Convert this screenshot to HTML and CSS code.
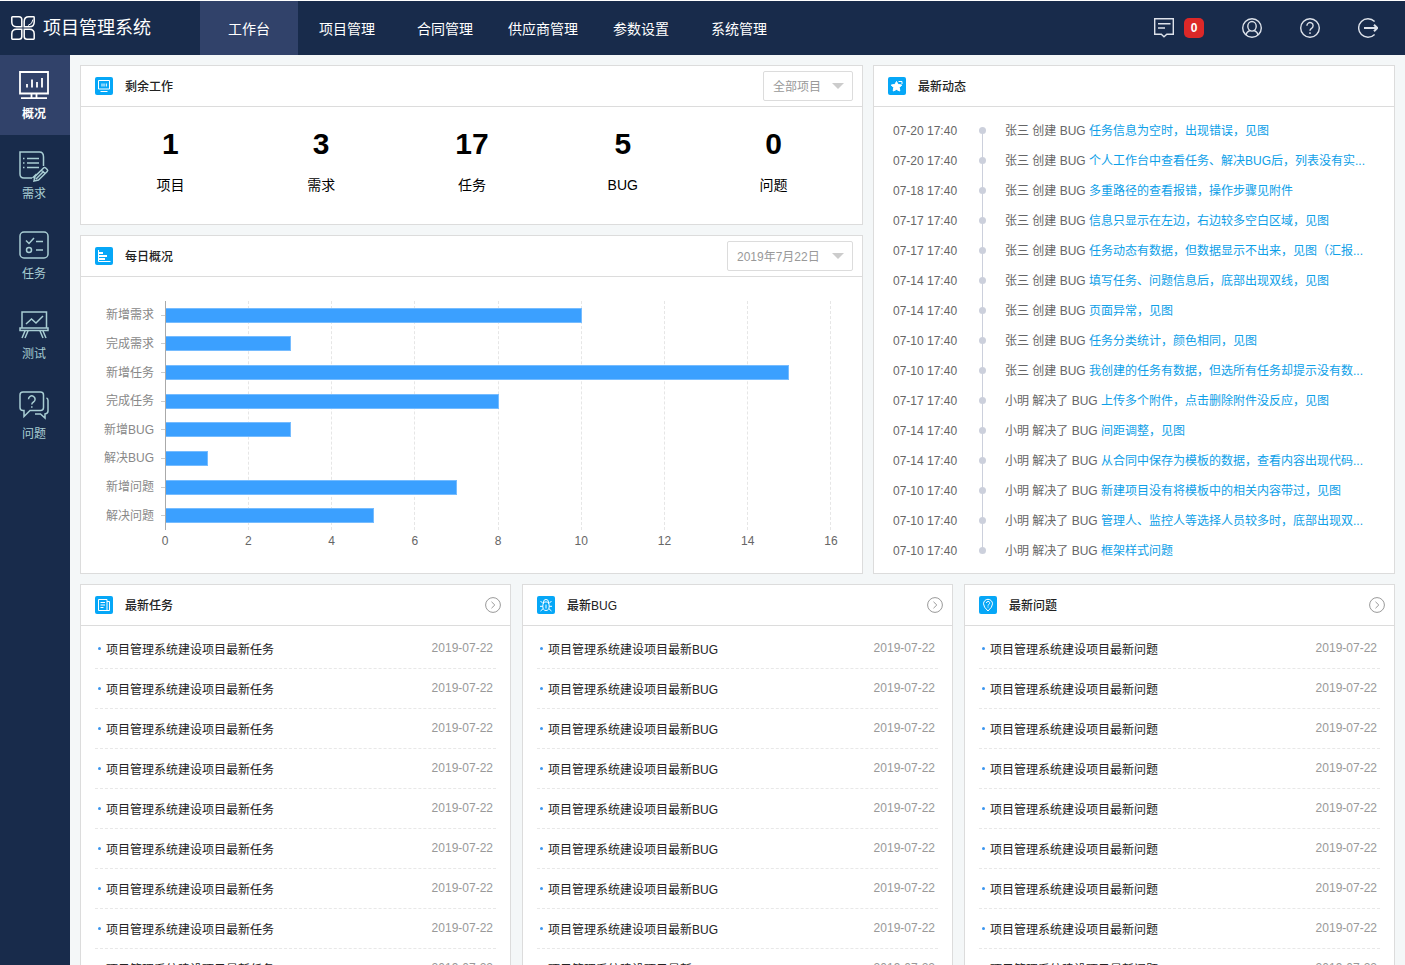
FILE: index.html
```html
<!DOCTYPE html>
<html lang="zh-CN">
<head>
<meta charset="utf-8">
<title>项目管理系统</title>
<link rel="stylesheet" href="styles.css">
</head>
<body>
<svg class="defs" aria-hidden="true">
  <symbol id="chevron" viewBox="0 0 16 16"><circle cx="8" cy="8" r="7.4"/><path d="M6.5 4.8 9.8 8l-3.3 3.2"/></symbol>
</svg>
<header class="topbar">
  <a class="brand" href="#">
    <svg class="brand-logo" viewBox="0 0 24 24" aria-hidden="true"><path d="M1.500.8H8q2.800 0 2.800 2.800v7.200H5.500Q.8 10.800.8 6V1.500q0-.7.7-.7zM22.500.8q.7 0 .7.7V6q0 4.800-4.700 4.800h-5.300V5.500q0-4.700 4.700-4.700zM1.500 23.200q-.7 0-.7-.7V18q0-4.800 4.700-4.800h5.300v7.200q0 2.800-2.800 2.800zM22.500 23.200q.7 0 .7-.7V18q0-4.800-4.700-4.800h-5.300v7.200q0 2.800 2.800 2.800z"/><path d="M22 3.500Q21.500 8 17 9.500" class="thin"/></svg>
    <span>项目管理系统</span>
  </a>
  <nav class="menu">
    <a class="menu-item active" href="#">工作台</a>
    <a class="menu-item" href="#">项目管理</a>
    <a class="menu-item" href="#">合同管理</a>
    <a class="menu-item" href="#">供应商管理</a>
    <a class="menu-item" href="#">参数设置</a>
    <a class="menu-item" href="#">系统管理</a>
  </nav>
  <div class="tools">
    <button class="tool" type="button" aria-label="消息"><svg viewBox="0 0 20 20"><path d="M.7.7h18.600v15.600h-6.500L10 18.800l-2.700-2.500H.7zM4 5.800h12.500M4 10h7"/></svg><span class="badge">0</span></button>
    <button class="tool" type="button" aria-label="用户"><svg viewBox="0 0 20 20"><circle cx="10" cy="10" r="9.300"/><ellipse cx="10" cy="8.300" rx="4.200" ry="4.800"/><path d="M4 17c.3-2.500 1.700-3.700 3.800-4.400M16 17c-.3-2.500-1.700-3.700-3.800-4.400"/></svg></button>
    <button class="tool" type="button" aria-label="帮助"><svg viewBox="0 0 20 20"><circle cx="10" cy="10" r="9.300"/><path d="M6.900 7.700a3.100 3.100 0 1 1 4.700 2.600Q10 11.200 10 12.800M10 14.300v1.600"/></svg></button>
    <button class="tool" type="button" aria-label="退出"><svg viewBox="0 0 20 20"><path d="M16.600 3.500a9.300 9.300 0 1 0 0 13"/><path d="M6 10h12M16 6.800l3.300 3.200-3.300 3.200" class="bold"/></svg></button>
  </div>
</header>
<div class="layout">
  <nav class="sidebar">
    <a class="side-item active" href="#"><svg viewBox="0 0 30 28"><path d="M1 1h28v21.500H1zM12.500 23v4M17.500 23v4M2 27.200h26"/><path d="M8 16.500V13M13 16.500V8.500M18 16.500V11M23 16.500V7"/></svg><span>概况</span></a>
    <a class="side-item" href="#"><svg viewBox="0 0 30 28"><path d="M24.500 15V6q0-5-4-5H1v22q0 4 4 4h8M4 7.500h1.500M4 12h1.500M4 16.500h1.500M8 7.500h12M8 12h12M8 16.500h12M15 30l1-4.500 8.500-8.500q1-1 2.200 0l1.500 1.500q1 1 0 2L19.500 29zM22.500 19l3.500 3.500M17 28l7-7M13.500 27l4-4"/></svg><span>需求</span></a>
    <a class="side-item" href="#"><svg viewBox="0 0 30 28"><rect x="1" y="1" width="28" height="26" rx="4"/><path d="M7 9.500l3 3 5-5.500M17 10.500h7M17 19h7"/><circle cx="10" cy="19" r="2.500"/></svg><span>任务</span></a>
    <a class="side-item" href="#"><svg viewBox="0 0 30 28"><path d="M3 17V1h24.500v16M1 17h28v2.500H1zM6 20 3 27M9 20l-3 7M21 20l3 7M24 20l3 7M7 13l5.500-5 4.500 4L24 5"/></svg><span>测试</span></a>
    <a class="side-item" href="#"><svg viewBox="0 0 30 28"><path d="M4 1h17.500q3 0 3 3v12.500q0 3-3 3H11l-6 6v-6H4q-3 0-3-3V4q0-3 3-3zM27.500 7q1.500.5 1.500 2.500V20q0 2.500-3 3v4l-4.500-4H16M9.500 8.200a3.300 3.300 0 1 1 5 2.800q-1.700 1-1.700 2.500M12.800 15.300v1.500"/></svg><span>问题</span></a>
  </nav>
  <main class="content">
    <div class="top-grid">
      <div class="column">
        <section class="card">
          <div class="card-head">
            <svg class="card-icon" viewBox="0 0 18 18"><path d="M3.500 3.500h11v8.500h-11zM7 6.500v3M9 6.500v3M11.300 6.500v3M5.500 14.500h7"/></svg>
            <h2>剩余工作</h2>
            <label class="picker picker-project"><select aria-label="项目"><option>全部项目</option></select></label>
          </div>
          <div class="stats">
            <div class="stat"><strong>1</strong><span>项目</span></div>
            <div class="stat"><strong>3</strong><span>需求</span></div>
            <div class="stat"><strong>17</strong><span>任务</span></div>
            <div class="stat"><strong>5</strong><span>BUG</span></div>
            <div class="stat"><strong>0</strong><span>问题</span></div>
          </div>
        </section>
        <section class="card grow">
          <div class="card-head">
            <svg class="card-icon" viewBox="0 0 18 18"><path d="M3.500 3v11.500H15.500"/><path class="thick" d="M4 6h4M4 9h8M4 12h6"/></svg>
            <h2>每日概况</h2>
            <label class="picker picker-date"><select aria-label="日期"><option>2019年7月22日</option></select></label>
          </div>
          <div class="chart">
            <div class="chart-labels"><span>新增需求</span><span>完成需求</span><span>新增任务</span><span>完成任务</span><span>新增BUG</span><span>解决BUG</span><span>新增问题</span><span>解决问题</span></div>
            <div class="plot">
              <div class="gridlines"><i></i><i></i><i></i><i></i><i></i><i></i><i></i><i></i></div>
              <div class="bars">
                <div class="bar-row"><div class="bar" style="width:62.5%"></div></div>
                <div class="bar-row"><div class="bar" style="width:18.75%"></div></div>
                <div class="bar-row"><div class="bar" style="width:93.75%"></div></div>
                <div class="bar-row"><div class="bar" style="width:50%"></div></div>
                <div class="bar-row"><div class="bar" style="width:18.75%"></div></div>
                <div class="bar-row"><div class="bar" style="width:6.25%"></div></div>
                <div class="bar-row"><div class="bar" style="width:43.75%"></div></div>
                <div class="bar-row"><div class="bar" style="width:31.25%"></div></div>
              </div>
            </div>
            <div class="axis"><span>0</span><span>2</span><span>4</span><span>6</span><span>8</span><span>10</span><span>12</span><span>14</span><span>16</span></div>
          </div>
        </section>
      </div>
      <section class="card">
        <div class="card-head">
          <svg class="card-icon" viewBox="0 0 18 18"><path class="solid" d="M8.500 4.500l1.600 2.900 3.700.6-2.500 2.500.5 3.500-3.300-1.500L5.200 14l.5-3.500L3.200 8l3.700-.6z"/><path d="M10.500 4.500h3.500v2.500"/></svg>
          <h2>最新动态</h2>
        </div>
        <ol class="feed">
          <li><time>07-20 17:40</time><p>张三 创建 BUG <a href="#">任务信息为空时，出现错误，见图</a></p></li>
          <li><time>07-20 17:40</time><p>张三 创建 BUG <a href="#">个人工作台中查看任务、解决BUG后，列表没有实...</a></p></li>
          <li><time>07-18 17:40</time><p>张三 创建 BUG <a href="#">多重路径的查看报错，操作步骤见附件</a></p></li>
          <li><time>07-17 17:40</time><p>张三 创建 BUG <a href="#">信息只显示在左边，右边较多空白区域，见图</a></p></li>
          <li><time>07-17 17:40</time><p>张三 创建 BUG <a href="#">任务动态有数据，但数据显示不出来，见图（汇报...</a></p></li>
          <li><time>07-14 17:40</time><p>张三 创建 BUG <a href="#">填写任务、问题信息后，底部出现双线，见图</a></p></li>
          <li><time>07-14 17:40</time><p>张三 创建 BUG <a href="#">页面异常，见图</a></p></li>
          <li><time>07-10 17:40</time><p>张三 创建 BUG <a href="#">任务分类统计，颜色相同，见图</a></p></li>
          <li><time>07-10 17:40</time><p>张三 创建 BUG <a href="#">我创建的任务有数据，但选所有任务却提示没有数...</a></p></li>
          <li><time>07-17 17:40</time><p>小明 解决了 BUG <a href="#">上传多个附件，点击删除附件没反应，见图</a></p></li>
          <li><time>07-14 17:40</time><p>小明 解决了 BUG <a href="#">间距调整，见图</a></p></li>
          <li><time>07-14 17:40</time><p>小明 解决了 BUG <a href="#">从合同中保存为模板的数据，查看内容出现代码...</a></p></li>
          <li><time>07-10 17:40</time><p>小明 解决了 BUG <a href="#">新建项目没有将模板中的相关内容带过，见图</a></p></li>
          <li><time>07-10 17:40</time><p>小明 解决了 BUG <a href="#">管理人、监控人等选择人员较多时，底部出现双...</a></p></li>
          <li><time>07-10 17:40</time><p>小明 解决了 BUG <a href="#">框架样式问题</a></p></li>
        </ol>
      </section>
    </div>
    <div class="bottom-grid">
      <section class="card">
        <div class="card-head">
          <svg class="card-icon" viewBox="0 0 18 18"><path d="M3.500 3.500h8.500v11h-8.500zM12 5.500h2.500v9H12M5.500 6.500h4.500M5.500 9h4.500M5.500 11.500h3"/></svg>
          <h2>最新任务</h2>
          <a class="more" href="#" aria-label="更多任务"><svg><use href="#chevron"/></svg></a>
        </div>
        <ul class="list">
          <li><a href="#">项目管理系统建设项目最新任务</a><time>2019-07-22</time></li>
          <li><a href="#">项目管理系统建设项目最新任务</a><time>2019-07-22</time></li>
          <li><a href="#">项目管理系统建设项目最新任务</a><time>2019-07-22</time></li>
          <li><a href="#">项目管理系统建设项目最新任务</a><time>2019-07-22</time></li>
          <li><a href="#">项目管理系统建设项目最新任务</a><time>2019-07-22</time></li>
          <li><a href="#">项目管理系统建设项目最新任务</a><time>2019-07-22</time></li>
          <li><a href="#">项目管理系统建设项目最新任务</a><time>2019-07-22</time></li>
          <li><a href="#">项目管理系统建设项目最新任务</a><time>2019-07-22</time></li>
          <li><a href="#">项目管理系统建设项目最新任务</a><time>2019-07-22</time></li>
        </ul>
      </section>
      <section class="card">
        <div class="card-head">
          <svg class="card-icon" viewBox="0 0 18 18"><ellipse cx="9" cy="10.200" rx="3.200" ry="4.300"/><path d="M6.500 7V6q0-2.500 2.500-2.500T11.500 6v1M9 8.500v4M3.500 5l2.500 2.500M14.500 5 12 7.500M3 10.300h2.800M15 10.300h-2.800M3.500 15 6 12.800M14.500 15 12 12.800"/></svg>
          <h2>最新BUG</h2>
          <a class="more" href="#" aria-label="更多BUG"><svg><use href="#chevron"/></svg></a>
        </div>
        <ul class="list">
          <li><a href="#">项目管理系统建设项目最新BUG</a><time>2019-07-22</time></li>
          <li><a href="#">项目管理系统建设项目最新BUG</a><time>2019-07-22</time></li>
          <li><a href="#">项目管理系统建设项目最新BUG</a><time>2019-07-22</time></li>
          <li><a href="#">项目管理系统建设项目最新BUG</a><time>2019-07-22</time></li>
          <li><a href="#">项目管理系统建设项目最新BUG</a><time>2019-07-22</time></li>
          <li><a href="#">项目管理系统建设项目最新BUG</a><time>2019-07-22</time></li>
          <li><a href="#">项目管理系统建设项目最新BUG</a><time>2019-07-22</time></li>
          <li><a href="#">项目管理系统建设项目最新BUG</a><time>2019-07-22</time></li>
          <li><a href="#">项目管理系统建设项目最新BUG</a><time>2019-07-22</time></li>
        </ul>
      </section>
      <section class="card">
        <div class="card-head">
          <svg class="card-icon" viewBox="0 0 18 18"><path d="M9 15Q4.500 11 4.500 7.800a4.500 4.500 0 0 1 9 0Q13.500 11 9 15zM7.500 7a1.600 1.600 0 1 1 2.300 1.400Q9 8.800 9 9.600M9 10.500v1"/></svg>
          <h2>最新问题</h2>
          <a class="more" href="#" aria-label="更多问题"><svg><use href="#chevron"/></svg></a>
        </div>
        <ul class="list">
          <li><a href="#">项目管理系统建设项目最新问题</a><time>2019-07-22</time></li>
          <li><a href="#">项目管理系统建设项目最新问题</a><time>2019-07-22</time></li>
          <li><a href="#">项目管理系统建设项目最新问题</a><time>2019-07-22</time></li>
          <li><a href="#">项目管理系统建设项目最新问题</a><time>2019-07-22</time></li>
          <li><a href="#">项目管理系统建设项目最新问题</a><time>2019-07-22</time></li>
          <li><a href="#">项目管理系统建设项目最新问题</a><time>2019-07-22</time></li>
          <li><a href="#">项目管理系统建设项目最新问题</a><time>2019-07-22</time></li>
          <li><a href="#">项目管理系统建设项目最新问题</a><time>2019-07-22</time></li>
          <li><a href="#">项目管理系统建设项目最新问题</a><time>2019-07-22</time></li>
        </ul>
      </section>
    </div>
  </main>
</div>
</body>
</html>
```

FILE: styles.css
```css
* { box-sizing: border-box; }
body {
  margin: 0;
  height: 100vh;
  display: flex;
  flex-direction: column;
  overflow: hidden;
  border-top: 1px solid #fff;
  background: #f4f7f8;
  color: #222;
  font: 12px/20px "Liberation Sans", "Noto Sans CJK SC", sans-serif;
}
a { color: inherit; text-decoration: none; }
h2, p, ul, ol { margin: 0; padding: 0; list-style: none; }
button, select { font: inherit; }
svg { fill: none; stroke: currentColor; flex: none; }
.defs { position: absolute; width: 0; height: 0; }

/* Top bar */
.topbar { display: flex; flex: none; height: 54px; background: #182b4b; color: #fff; }
.brand { display: flex; align-items: center; gap: 8px; width: 200px; padding-left: 11px; font-size: 18px; }
.brand-logo { width: 24px; height: 24px; stroke-width: 1.5; }
.brand-logo .thin { stroke-width: 1; }
.menu { display: flex; }
.menu-item { display: flex; align-items: center; justify-content: center; width: 98px; padding-top: 2px; font-size: 14px; }
.menu-item.active { background: #31426a; }
.tools { display: flex; align-items: center; gap: 38px; margin-left: auto; padding-right: 27px; }
.tool { display: flex; align-items: center; gap: 10px; padding: 0; border: 0; background: none; color: #dde2ea; cursor: pointer; }
.tool svg { width: 20px; height: 20px; stroke-width: 1.4; }
.tool .bold { stroke-width: 2; }
.badge { width: 20px; height: 20px; border-radius: 5px; background: #dc2828; color: #fff; font-weight: bold; text-align: center; }

/* Sidebar */
.layout { display: flex; flex: 1; min-height: 0; }
.sidebar { flex: none; width: 70px; background: #182b4b; color: #a8cdd3; }
.side-item { display: flex; flex-direction: column; align-items: center; height: 80px; padding: 16px 2px 0 0; }
.side-item svg { width: 30px; height: 28px; margin-bottom: 5px; stroke-width: 1.5; overflow: visible; }
.side-item.active { background: #31426a; color: #fff; font-weight: bold; }
.side-item.active svg { stroke-width: 1.8; }

/* Cards */
.content { flex: 1; min-width: 0; padding: 10px; overflow-y: auto; scrollbar-width: none; }
.top-grid { display: grid; grid-template-columns: 3fr 2fr; gap: 10px; margin-bottom: 10px; }
.bottom-grid { display: grid; grid-template-columns: repeat(3, 1fr); gap: 11px; }
.top-grid > *, .bottom-grid > * { min-width: 0; }
.column { display: flex; flex-direction: column; gap: 10px; }
.grow { flex: 1; }
.card { border: 1px solid #dcdcdc; background: #fff; }
.card-head { display: flex; align-items: center; height: 41px; padding: 0 9px 0 14px; border-bottom: 1px solid #dcdcdc; }
.card-head h2 { margin-left: 12px; padding-top: 2px; font-size: 12px; font-weight: 500; }
.card-icon { width: 18px; height: 18px; border-radius: 2px; background: #06a7f7; color: #fff; }
.card-icon .thick { stroke-width: 2; }
.card-icon .solid { fill: #fff; }
.more { display: flex; margin-left: auto; color: #999; }
.more svg { width: 16px; height: 16px; }

.picker { position: relative; margin-left: auto; }
.picker select { width: 100%; height: 30px; padding: 1px 9px 0; border: 1px solid #dcdcdc; border-radius: 2px; background: #fff; color: #999; appearance: none; display: block; }
.picker::after { content: ""; position: absolute; right: 9px; top: 12px; border: 6px solid transparent; border-top-color: #ccc; border-bottom: 0; pointer-events: none; }
.picker-project { width: 90px; }
.picker-date { width: 126px; }

/* Remaining work */
.stats { display: grid; grid-template-columns: repeat(5, 1fr); padding: 19px 13px 29px 14px; color: #000; text-align: center; }
.stat { display: flex; flex-direction: column; gap: 13px; font-size: 14px; }
.stat strong { font-size: 30px; line-height: 36px; }

/* Daily bar chart */
.chart { display: grid; grid-template: 229px 20px / 73px 1fr; column-gap: 11px; row-gap: 1px; padding: 24px 31px 0 0; color: #666; }
.chart-labels { display: grid; grid-template-rows: repeat(8, 1fr); align-items: center; color: #888; text-align: right; }
.plot { position: relative; border-left: 1px solid #aaa; }
.gridlines { position: absolute; inset: 0; display: grid; grid-template-columns: repeat(8, 1fr); }
.gridlines i { border-right: 1px dashed #e6e6e6; }
.bars { position: relative; display: grid; grid-template-rows: repeat(8, 1fr); height: 100%; }
.bar-row { position: relative; display: flex; align-items: center; }
.bar-row::before { content: ""; position: absolute; left: -5px; width: 4px; border-top: 1px solid #ccc; }
.bar { height: 15px; border: 1px solid #76bcff; border-left: 0; background: #3ba0ff; }
.axis { grid-column: 2; display: flex; justify-content: space-between; }
.axis span { display: flex; justify-content: center; width: 0; }

/* Activity feed */
.feed { padding: 9px 29px 7px 19px; color: #666; }
.feed li { display: flex; height: 30px; align-items: center; }
.feed time { flex: none; width: 86px; }
.feed p { position: relative; flex: 1; min-width: 0; padding-left: 26px; overflow: hidden; white-space: nowrap; line-height: 30px; }
.feed p::before { content: ""; position: absolute; left: 3px; top: 0; height: 100%; border-left: 1px solid #ccd0dc; }
.feed p::after { content: ""; position: absolute; left: 0; top: 11px; width: 7px; height: 7px; border-radius: 50%; background: #ccd0dc; }
.feed li:first-child p::before { top: 15px; }
.feed li:last-child p::before { height: 15px; }
.feed a { color: #0da0e8; }

/* Latest lists */
.list { padding: 3px 14px 0; }
.list li { display: flex; align-items: center; height: 40px; padding: 0 3px; border-bottom: 1px dashed #e8e8e8; }
.list li::before { content: ""; width: 3px; height: 3px; margin-right: 5px; border-radius: 50%; background: #3b96f0; }
.list a { padding-top: 2px; }
.list time { margin-left: auto; padding-bottom: 2px; color: #999; }
```
